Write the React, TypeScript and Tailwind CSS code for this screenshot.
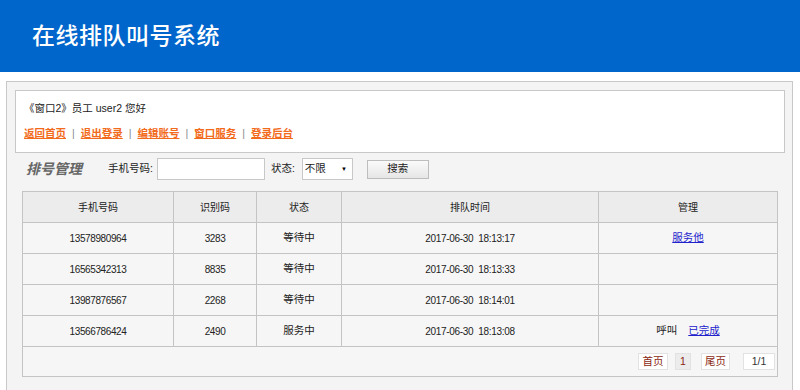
import React from "react";

type Row = { phone: string; code: string; status: string; time: string; manage: "serve" | "done" | null };

const rows: Row[] = [
  { phone: "13578980964", code: "3283", status: "等待中", time: "2017-06-30 18:13:17", manage: "serve" },
  { phone: "16565342313", code: "8835", status: "等待中", time: "2017-06-30 18:13:33", manage: null },
  { phone: "13987876567", code: "2268", status: "等待中", time: "2017-06-30 18:14:01", manage: null },
  { phone: "13566786424", code: "2490", status: "服务中", time: "2017-06-30 18:13:08", manage: "done" },
];

const links = ["返回首页", "退出登录", "编辑账号", "窗口服务", "登录后台"];

const font = { fontFamily: '"Liberation Sans","Noto Sans CJK SC",sans-serif' };

export default function App() {
  return (
    <div className="h-[390px] overflow-hidden bg-white text-[10px] text-[#333]" style={font}>
      <header className="flex h-[72px] items-center bg-[#0066cc] pl-8">
        <h1 className="text-[23px] font-medium leading-none tracking-[0.5px] text-white">在线排队叫号系统</h1>
      </header>

      <div className="pl-[6px] pr-[7px] pt-[9px]">
        <div className="border border-[#c8c8c8] bg-[#f4f4f4] pb-4 pl-2 pr-[7px] pt-2">
          <div className="flex h-[63px] flex-col justify-center gap-[9px] border border-[#c8c8c8] bg-white pl-2">
            <p className="text-[10.5px] text-[#222]">《窗口2》员工 user2 您好</p>
            <nav className="flex items-center gap-[6px] text-[10.5px]">
              {links.map((l, i) => (
                <React.Fragment key={l}>
                  {i > 0 && <span className="text-[#888]">|</span>}
                  <a href="#" className="font-bold text-[#f26a1b] underline">
                    {l}
                  </a>
                </React.Fragment>
              ))}
            </nav>
          </div>

          <div className="mt-[5px] flex h-[22px] items-center">
            <span className="ml-[11px] w-[82px] text-[14px] font-bold italic text-[#666]">排号管理</span>
            <label className="text-[10.5px] text-[#222]">手机号码:</label>
            <input className="ml-[4px] h-[22px] w-[108px] border border-[#c8c8c8] bg-white" />
            <label className="ml-[6px] text-[10.5px] text-[#222]">状态:</label>
            <div className="relative ml-[7px]">
              <select className="h-[22px] w-[51px] appearance-none border border-[#c8c8c8] bg-white pl-[2px] text-[10.5px] text-[#222] outline-none">
                <option>不限</option>
              </select>
              <span className="pointer-events-none absolute right-[6px] top-[8px] text-[6px] leading-none text-black">▼</span>
            </div>
            <button className="ml-[14px] h-[19px] w-[62px] border border-[#bdbdbd] bg-gradient-to-b from-[#fafafa] to-[#e6e6e6] text-[10.5px] text-[#222]">
              搜索
            </button>
          </div>

          <table className="ml-[7px] mt-[11px] w-[755px] table-fixed border-collapse border border-[#c4c4c4] text-center text-[10px] text-[#222]">
            <colgroup>
              <col className="w-[151px]" />
              <col className="w-[83px]" />
              <col className="w-[85px]" />
              <col className="w-[257px]" />
              <col className="w-[179px]" />
            </colgroup>
            <thead>
              <tr className="h-[31px] bg-[#ececec]">
                {["手机号码", "识别码", "状态", "排队时间", "管理"].map((h) => (
                  <th key={h} className="border border-[#c4c4c4] font-normal">
                    {h}
                  </th>
                ))}
              </tr>
            </thead>
            <tbody className="bg-[#f6f6f6]">
              {rows.map((r) => (
                <tr key={r.phone} className="h-[31px]">
                  <td className="border border-[#c4c4c4] tracking-[-0.4px]">{r.phone}</td>
                  <td className="border border-[#c4c4c4] tracking-[-0.4px]">{r.code}</td>
                  <td className="border border-[#c4c4c4] text-[10.5px]">{r.status}</td>
                  <td className="whitespace-pre border border-[#c4c4c4] tracking-[-0.3px]">{r.time.replace(" ", "  ")}</td>
                  <td className="border border-[#c4c4c4] text-[10.5px]">
                    {r.manage === "serve" && (
                      <a href="#" className="text-[#2222cc] underline">
                        服务他
                      </a>
                    )}
                    {r.manage === "done" && (
                      <>
                        <span className="mr-[11px]">呼叫</span>
                        <a href="#" className="text-[#2222cc] underline">
                          已完成
                        </a>
                      </>
                    )}
                  </td>
                </tr>
              ))}
              <tr className="h-[30px]">
                <td colSpan={5} className="border border-[#c4c4c4] pr-[2px]">
                  <div className="flex items-center justify-end text-[10.5px]">
                    <span className="flex h-[17px] w-[30px] items-center justify-center border border-[#e2e2e2] bg-white text-[#8a1f11]">首页</span>
                    <span className="ml-[7px] flex h-[17px] w-[16px] items-center justify-center border border-[#e2e2e2] bg-[#ececec] text-[#8a1f11]">1</span>
                    <span className="ml-[10px] flex h-[17px] w-[29px] items-center justify-center border border-[#e2e2e2] bg-white text-[#8a1f11]">尾页</span>
                    <span className="ml-[13px] flex h-[17px] w-[32px] items-center justify-center border border-[#e2e2e2] bg-white text-[#333]">1/1</span>
                  </div>
                </td>
              </tr>
            </tbody>
          </table>
        </div>
      </div>
    </div>
  );
}
